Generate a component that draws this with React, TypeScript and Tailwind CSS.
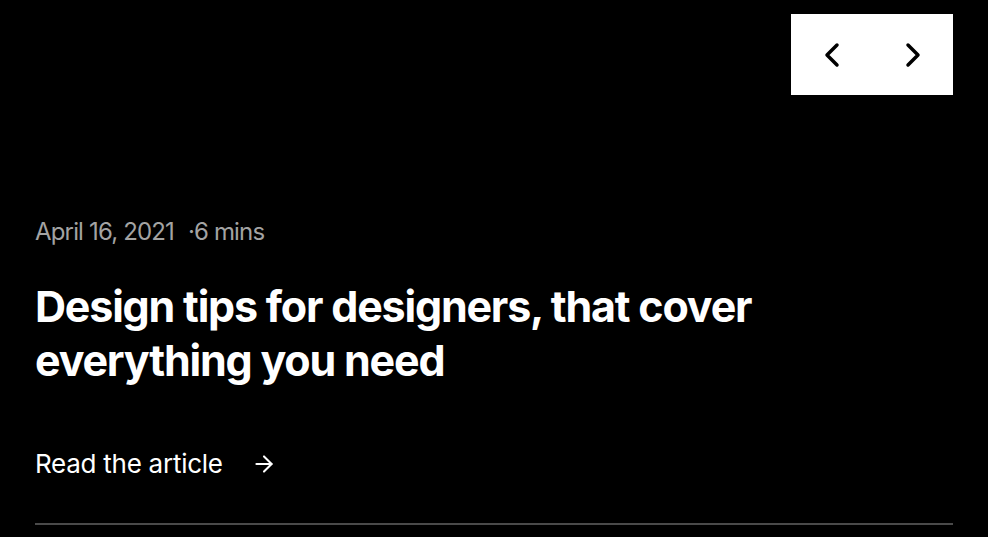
import { ChevronLeft, ChevronRight, ArrowRight } from 'lucide-react';

export default function App() {
    return (
        <div className="w-[988px] h-[537px] bg-black text-white overflow-hidden font-['Inter',sans-serif]">
            <div className="px-[35px] pt-[14px]">

                {/* Slider controls */}
                <div className="flex justify-end">
                    <div className="flex bg-white text-black">
                        <button className="w-[81px] h-[81px] flex items-center justify-center">
                            <ChevronLeft size={40} strokeWidth={2.1} />
                        </button>
                        <button className="w-[81px] h-[81px] flex items-center justify-center">
                            <ChevronRight size={40} strokeWidth={2.1} />
                        </button>
                    </div>
                </div>

                {/* Article */}
                <div className="pt-[121px]">
                    <p className="text-[24px] leading-[32px] tracking-[-0.035em] text-[#a3a3a3]">
                        April 16, 2021 <span className="ml-2">·</span>6 mins
                    </p>
                    <h2 className="mt-[31px] text-[43px] leading-[54px] font-bold tracking-[-0.028em] max-w-[760px]">
                        Design tips for designers, that cover everything you need
                    </h2>
                    <a href="#" className="mt-[60px] flex items-center gap-[28px] text-[26px] leading-[34px] tracking-[-0.01em]">
                        Read the article
                        <ArrowRight size={26} strokeWidth={1.9} />
                    </a>
                    <div className="mt-[42px] h-[2px] bg-[#4a4a4a]"></div>
                </div>

            </div>
        </div>
    );
}
